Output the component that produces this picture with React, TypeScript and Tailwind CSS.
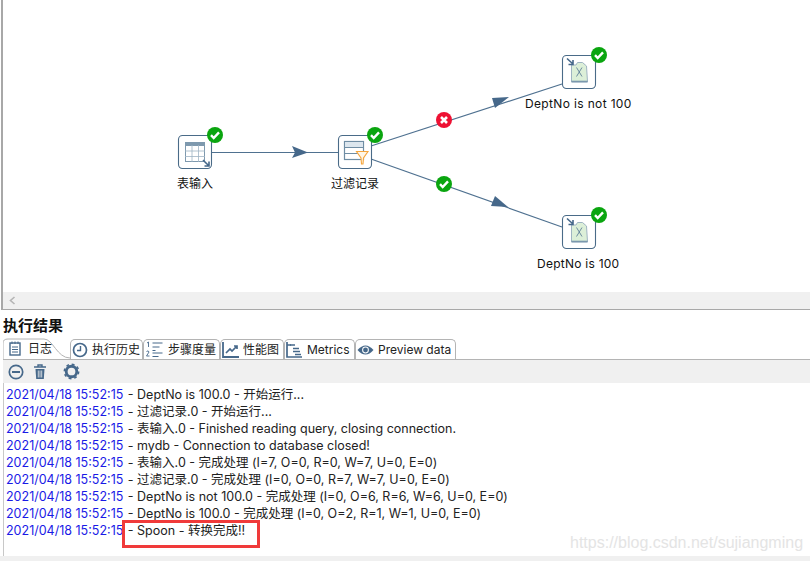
import type { ReactNode } from 'react';

const FONT = "font-['Inter','Noto_Sans_CJK_SC',sans-serif]";

const logs = [
  '- DeptNo is 100.0 - 开始运行...',
  '- 过滤记录.0 - 开始运行...',
  '- 表输入.0 - Finished reading query, closing connection.',
  '- mydb - Connection to database closed!',
  '- 表输入.0 - 完成处理 (I=7, O=0, R=0, W=7, U=0, E=0)',
  '- 过滤记录.0 - 完成处理 (I=0, O=0, R=7, W=7, U=0, E=0)',
  '- DeptNo is not 100.0 - 完成处理 (I=0, O=6, R=6, W=6, U=0, E=0)',
  '- DeptNo is 100.0 - 完成处理 (I=0, O=2, R=1, W=1, U=0, E=0)',
  '- Spoon - 转换完成!!',
];

function CheckBadge({ x, y }: { x: number; y: number }) {
  return (
    <g transform={`translate(${x} ${y})`}>
      <circle r="8" fill="#0aa50f" />
      <path d="M-4 0.2 L-1.3 3 L4 -2.6" fill="none" stroke="#fff" strokeWidth="2.4" />
    </g>
  );
}

function NodeBox({ x, y }: { x: number; y: number }) {
  return <rect x={x + 0.5} y={y + 0.5} width="33" height="33" rx="4" fill="#fff" stroke="#4a6b88" strokeWidth="1.1" />;
}

function ExcelIcon({ x, y }: { x: number; y: number }) {
  return (
    <g transform={`translate(${x} ${y})`}>
      <path d="M6.5 7 L11 7 L12.5 4.5 L17.5 4.5 L21.5 8 L22.5 24 L6.5 24 Z" fill="#dcefd8" stroke="#9fb4c2" strokeWidth="1" />
      <path d="M6.5 23.5 L22.5 23.5" stroke="#7b98ad" strokeWidth="1.6" />
      <path d="M11.5 9.5 L17 18.5 M17 9.5 L11.5 18.5" stroke="#5f7f98" strokeWidth="0.9" />
      <path d="M2 0.5 L8 6 M8 2 L8 6.5 L3.5 6.5" fill="none" stroke="#46688a" strokeWidth="1.6" />
    </g>
  );
}

function Canvas() {
  return (
    <div className="relative h-[292px] bg-white">
      <svg width="810" height="292" viewBox="3 0 810 292" className="absolute left-0 top-0">
        <g stroke="#4f7190" strokeWidth="1.2" fill="none">
          <path d="M212 152.5 L338 152.5" />
          <path d="M371 146 L562 84" />
          <path d="M371 159 L562 227" />
        </g>
        <path d="M292 146 L308 152.5 L292 158 L295 152.5 Z" fill="#46688a" />
        <path d="M492 98 L509 97 L495 108 Z" fill="#46688a" />
        <path d="M495 196 L508 207 L491 206 Z" fill="#46688a" />

        <NodeBox x={178} y={135} />
        <g transform="translate(185 142)">
          <rect x="0.5" y="0.5" width="19" height="19" fill="#fff" stroke="#7e99ae" strokeWidth="1" />
          <rect x="0" y="0" width="20" height="4" fill="#7e99ae" />
          <path d="M0 9 H20 M0 14.5 H20 M7 3 V20 M13.5 3 V20" stroke="#9fb4c4" strokeWidth="0.8" />
          <path d="M18 18 L24 24 M24 19.5 L24 24 L19.5 24" fill="none" stroke="#46688a" strokeWidth="1.6" />
        </g>

        <NodeBox x={338} y={135} />
        <g transform="translate(344 141)">
          <rect x="0.5" y="0.5" width="19" height="18" fill="#fff" stroke="#6f8da4" strokeWidth="1.2" />
          <rect x="1" y="1" width="18" height="5" fill="#dce6ee" />
          <path d="M0 6.5 H20 M0 12.5 H20" stroke="#6f8da4" strokeWidth="1" />
          <path d="M12.5 10.5 L24 10.5 L19.5 17 L19 23 L17.5 23 L17 17 Z" fill="#fff6e6" stroke="#f5a53c" strokeWidth="1.1" />
        </g>

        <NodeBox x={562} y={55} />
        <ExcelIcon x={565} y={58} />
        <NodeBox x={562} y={215} />
        <ExcelIcon x={565} y={218} />

        <CheckBadge x={215} y={135} />
        <CheckBadge x={375} y={135} />
        <CheckBadge x={599} y={55} />
        <CheckBadge x={599} y={215} />
        <CheckBadge x={444} y={184} />

        <g transform="translate(444 120)">
          <circle r="8" fill="#ee1133" />
          <path d="M-3 -3 L3 3 M3 -3 L-3 3" stroke="#fff" strokeWidth="2.6" />
        </g>
      </svg>
      <span className="absolute left-[174px] top-[176px] text-[12px] leading-4 text-[#111]">表输入</span>
      <span className="absolute left-[328px] top-[176px] text-[12px] leading-4 text-[#111]">过滤记录</span>
      <span className="absolute left-[522px] top-[96px] text-[12px] leading-4 tracking-[0.35px] text-[#111]">DeptNo is not 100</span>
      <span className="absolute left-[534px] top-[256px] text-[12px] leading-4 tracking-[0.25px] text-[#111]">DeptNo is 100</span>
    </div>
  );
}

function Tab({ icon, label, width }: { icon: ReactNode; label: string; width: string }) {
  return (
    <div className={`flex h-[20px] items-center gap-[4px] rounded-t-[5px] border border-b-0 border-[#b4b4b4] bg-white pl-[1px] ${width}`}>
      {icon}
      <span className="whitespace-nowrap text-[12px] leading-4 text-[#222]">{label}</span>
    </div>
  );
}

const ic = { fill: 'none', stroke: '#46688a' };

export default function App() {
  return (
    <div className={`relative h-[561px] w-[810px] overflow-hidden bg-white ${FONT}`}>
      <div className="ml-[1px] border-l-2 border-[#a8a8a8]">
        <Canvas />
        <div className="flex h-[17px] items-center bg-[#f0f0f0] pl-[6px]">
          <svg width="7" height="9" viewBox="0 0 7 9">
            <path d="M5.5 1 L1.5 4.5 L5.5 8" fill="none" stroke="#b5b5b5" strokeWidth="1.6" />
          </svg>
        </div>
      </div>
      <div className="ml-[1px] h-[1px] bg-[#a8a8a8]" />

      <div className="pl-[3px] pt-[6px] text-[15px] font-bold leading-[19px] text-[#111]">执行结果</div>

      <div className="ml-[3px] mt-[3px] flex h-[22px] items-end border-b border-[#b4b4b4]">
        <div className="relative flex h-[21px] w-[68px] items-center gap-[7px] pl-[6px]">
          <svg width="68" height="21" className="absolute left-0 top-0">
            <path d="M0 21 V5 Q0 1 5 1 H41 C50 1 54 20 67 20" fill="#fff" stroke="#b4b4b4" />
          </svg>
          <svg width="12" height="15" viewBox="0 0 12 15" className="relative" {...ic} strokeWidth="1.4">
            <rect x="1" y="2" width="10" height="12" />
            <path d="M3 0.5 V3 M6 0.5 V3 M9 0.5 V3 M3 6 H9 M3 8.5 H9 M3 11 H9" strokeWidth="1" />
          </svg>
          <span className="relative text-[12px] leading-4 text-[#222]">日志</span>
        </div>
        <Tab
          width="w-[73px] -ml-[1px]"
          label="执行历史"
          icon={
            <svg width="16" height="16" viewBox="0 0 16 16" {...ic} strokeWidth="1.7">
              <circle cx="8" cy="8" r="6.5" />
              <path d="M8.5 4 V8.5 H5" strokeWidth="1.4" />
            </svg>
          }
        />
        <Tab
          width="w-[77px]"
          label="步骤度量"
          icon={
            <svg width="19" height="17" viewBox="0 0 18 17" {...ic}>
              <path d="M7 2 H17 M7 6 H14 M7 9.5 H10 M7 12 H17 M7 15.5 H13" strokeWidth="1.2" />
              <path d="M1.5 2 L3 1 V6 M1 10.5 Q3 9 3.5 11 L1 15 H4" strokeWidth="0.9" />
            </svg>
          }
        />
        <Tab
          width="w-[64px]"
          label="性能图"
          icon={
            <svg width="17" height="16" viewBox="0 0 17 16" {...ic}>
              <path d="M1 0 V15 H17" strokeWidth="1.8" />
              <path d="M4 11 L8 7 L10 9 L15 4 M12 4 H15 V7" strokeWidth="1.7" />
            </svg>
          }
        />
        <Tab
          width="w-[71px]"
          label="Metrics"
          icon={
            <svg width="17" height="16" viewBox="0 0 17 16" {...ic}>
              <path d="M1 0 V15 H16 M1 3 H5" strokeWidth="1.7" />
              <path d="M4 3 H9 M7 6.5 H13 M7 9.5 H14 M9 12.5 H15" strokeWidth="1.6" />
            </svg>
          }
        />
        <Tab
          width="w-[101px]"
          label="Preview data"
          icon={
            <svg width="17" height="12" viewBox="0 0 17 12">
              <path d="M0.5 6 Q8.5 -3 16.5 6 Q8.5 15 0.5 6 Z" fill="#46688a" />
              <circle cx="8.5" cy="6" r="3.4" fill="#fff" />
              <circle cx="8.5" cy="6" r="2.4" fill="#46688a" />
            </svg>
          }
        />
      </div>

      <div className="ml-[3px] flex h-[23px] items-center bg-[#f0f0f0] pl-[5px]">
        <svg width="16" height="16" viewBox="0 0 16 16" {...ic} strokeWidth="1.7">
          <circle cx="8" cy="8" r="6.7" />
          <path d="M4 8 H12" strokeWidth="2" />
        </svg>
        <svg width="14" height="16" viewBox="0 0 14 16" className="ml-[9px]">
          <path d="M1 3 H13 M5 2.5 V1 H9 V2.5" fill="none" stroke="#46688a" strokeWidth="1.4" />
          <path d="M2.5 5 H11.5 L10.8 15 H3.2 Z" fill="#46688a" />
          <path d="M5.3 6.5 V13.5 M7 6.5 V13.5 M8.7 6.5 V13.5" stroke="#f0f0f0" strokeWidth="0.8" />
        </svg>
        <svg width="17" height="17" viewBox="0 0 18 18" className="ml-[16px]">
          <circle cx="9" cy="9" r="5.6" fill="none" stroke="#46688a" strokeWidth="3" />
          <circle cx="9" cy="9" r="7.6" fill="none" stroke="#46688a" strokeWidth="1.6" strokeDasharray="3 2.97" />
        </svg>
      </div>

      <div className="ml-[3px] h-[173px] border-l border-[#c8c8c8] pl-[2px] pt-[3px]">
        {logs.map((line, i) => (
          <div key={i} className="flex h-[17px] items-center whitespace-pre text-[12.5px] leading-[17px]">
            <span className="text-[#1a1ae6]">2021/04/18 15:52:15</span>
            <span className="pl-[1px] text-[#222]"> {line}</span>
          </div>
        ))}
      </div>
      <div className="h-[5px] bg-[#f0f0f0]" />

      {/* red annotation and watermark sit on top of the screenshot */}
      <div className="absolute left-[122px] top-[520px] h-[28px] w-[138px] border-[3px] border-[#f03a3a]" />
      <span className="absolute left-[570px] top-[534px] font-['Liberation_Sans',sans-serif] text-[16px] leading-[18px] text-[#e4e4e4]">
        https://blog.csdn.net/sujiangming
      </span>
    </div>
  );
}
